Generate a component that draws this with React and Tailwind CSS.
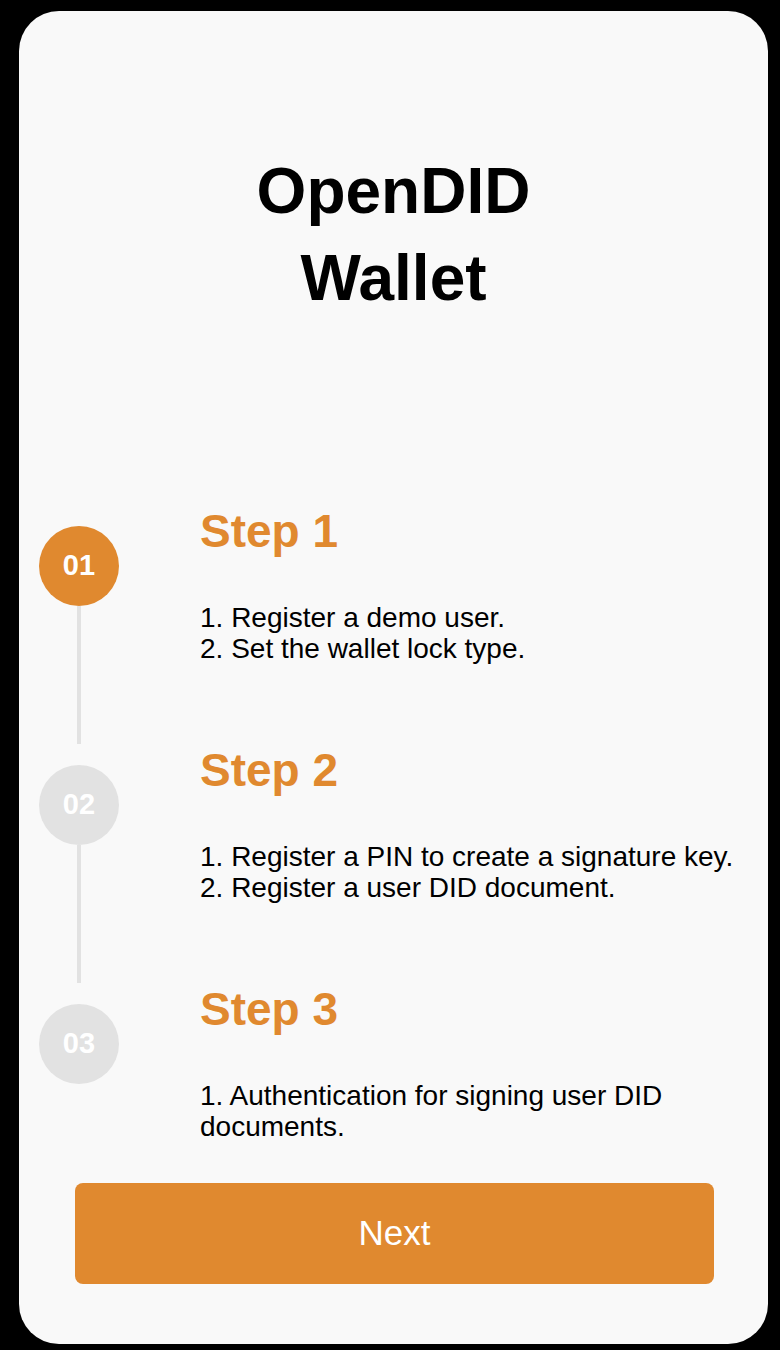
import React from 'react';

const steps = [
  {
    num: '01',
    title: 'Step 1',
    lines: ['1. Register a demo user.', '2. Set the wallet lock type.'],
    active: true,
  },
  {
    num: '02',
    title: 'Step 2',
    lines: ['1. Register a PIN to create a signature key.', '2. Register a user DID document.'],
    active: false,
  },
  {
    num: '03',
    title: 'Step 3',
    lines: ['1. Authentication for signing user DID documents.'],
    active: false,
  },
];

const StepRow = ({ step, last }) => (
  <div className={`flex ${last ? '' : 'h-[239px]'}`}>
    {/* Circle + connector */}
    <div className="flex flex-col items-center w-[80px] ml-[20px]">
      <div
        className={`mt-[21px] w-[80px] h-[80px] rounded-full flex items-center justify-center text-white font-bold text-[29px] ${
          step.active ? 'bg-[#e0892f]' : 'bg-[#e2e2e2]'
        }`}
      >
        {step.num}
      </div>
      {!last && <div className="flex-1 w-[4px] bg-[#e2e2e2]" />}
    </div>

    {/* Text */}
    <div className="ml-[81px] w-[565px]">
      <h2 className="text-[46px] leading-[53px] font-bold text-[#e0892f]">{step.title}</h2>
      <div className="mt-[44px] text-[28px] leading-[31px] text-black">
        {step.lines.map((line, idx) => (
          <p key={idx}>{line}</p>
        ))}
      </div>
    </div>
  </div>
);

export default function App() {
  return (
    <div
      className="min-h-[1350px] bg-black pt-[11px] pl-[19px]"
      style={{ fontFamily: '"Liberation Sans", Arial, sans-serif' }}
    >
      <div className="w-[749px] h-[1333px] bg-[#f9f9f9] rounded-[40px] flex flex-col overflow-hidden">
        {/* Title */}
        <h1 className="mt-[137px] text-center text-[64px] leading-[87px] font-bold text-black">
          OpenDID
          <br />
          Wallet
        </h1>

        {/* Steps */}
        <div className="mt-[183px]">
          {steps.map((step, idx) => (
            <StepRow key={step.num} step={step} last={idx === steps.length - 1} />
          ))}
        </div>

        {/* Next Button */}
        <div className="mt-auto mb-[60px] pl-[56px]">
          <button className="w-[639px] h-[101px] bg-[#e0892f] rounded-[8px] text-white text-[35px]">
            Next
          </button>
        </div>
      </div>
    </div>
  );
}
